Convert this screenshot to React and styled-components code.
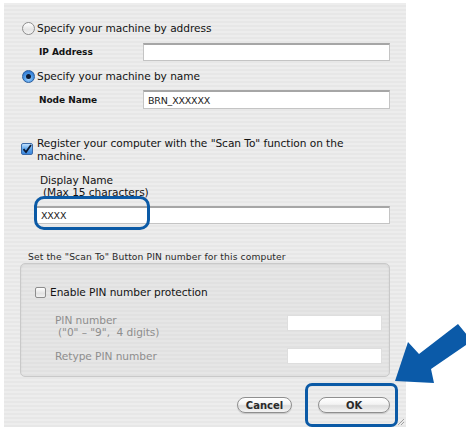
import React from "react";
import styled, { createGlobalStyle } from "styled-components";

const Global = createGlobalStyle`
  html, body { margin: 0; padding: 0; background: #ffffff; }
  body { font-family: "DejaVu Sans", "Liberation Sans", sans-serif; }
`;

const Stage = styled.div`
  position: relative;
  width: 466px;
  height: 432px;
  overflow: hidden;
  background: #fff;
`;

const Panel = styled.div`
  position: relative;
  margin: 3px 0 0 4px;
  width: 402px;
  height: 424px;
  box-sizing: border-box;
  padding: 17px 0 0 18px;
  display: flex;
  flex-direction: column;
  background: repeating-linear-gradient(
    to bottom,
    #ededed 0px,
    #ededed 2px,
    #e7e7e7 2px,
    #e7e7e7 4px
  );
  font-size: 10.6px;
  letter-spacing: -0.05px;
  color: #131313;
`;

const Row = styled.div`
  display: flex;
  align-items: center;
  height: ${(p) => p.$h || 16}px;
  margin-top: ${(p) => p.$mt || 0}px;
  margin-left: ${(p) => p.$ml || 0}px;
  white-space: nowrap;
`;

const RadioDot = styled.span`
  box-sizing: border-box;
  width: 13px;
  height: 13px;
  border-radius: 50%;
  flex: none;
  display: flex;
  align-items: center;
  justify-content: center;
  border: 1px solid ${(p) => (p.$on ? "#2a5d9c" : "#8d8d8d")};
  background: ${(p) =>
    p.$on
      ? "radial-gradient(circle at 50% 70%, #a9d6ff 0%, #4f9be8 45%, #1f64c4 100%)"
      : "linear-gradient(#ffffff, #e4e4e4 60%, #f4f4f4)"};
  &::after {
    content: "";
    display: ${(p) => (p.$on ? "block" : "none")};
    width: 5px;
    height: 5px;
    border-radius: 50%;
    background: #0f1b33;
  }
`;

const OptionText = styled.span`
  margin-left: 2px;
`;

const FieldLabel = styled.span`
  width: ${(p) => p.$w}px;
  flex: none;
  font-weight: bold;
  font-size: 9px;
  box-sizing: border-box;
`;

const TextInput = styled.div`
  box-sizing: border-box;
  width: ${(p) => p.$w}px;
  height: ${(p) => p.$h || 18}px;
  margin-left: ${(p) => p.$ml || 0}px;
  background: #ffffff;
  border: 1px solid #c4c4c4;
  border-top: 2px solid #a6a6a6;
  display: flex;
  align-items: center;
  padding-left: 4px;
  font-size: 9.5px;
  letter-spacing: -0.2px;
  color: #222;
`;

const CheckRow = styled.div`
  display: flex;
  align-items: flex-start;
  margin-top: ${(p) => p.$mt || 0}px;
  margin-left: ${(p) => p.$ml || 0}px;
`;

const CheckBox = styled.span`
  box-sizing: border-box;
  width: ${(p) => (p.$on ? 12 : 11)}px;
  height: ${(p) => (p.$on ? 12 : 11)}px;
  margin-top: ${(p) => p.$mt || 0}px;
  flex: none;
  border-radius: 2px;
  border: 1px solid ${(p) => (p.$on ? "#3a6aa8" : "#8d8d8d")};
  background: ${(p) =>
    p.$on
      ? "linear-gradient(#bfe0ff, #5ea6ec 50%, #3b86dc)"
      : "linear-gradient(#ffffff, #e2e2e2 60%, #f2f2f2)"};
  display: flex;
  align-items: center;
  justify-content: center;
`;

const CheckText = styled.div`
  margin-left: ${(p) => p.$ml || 4}px;
  line-height: ${(p) => p.$lh || 13}px;
  width: ${(p) => (p.$w ? `${p.$w}px` : "auto")};
  white-space: ${(p) => (p.$w ? "normal" : "nowrap")};
`;

const Stack = styled.div`
  display: flex;
  flex-direction: column;
  margin-top: ${(p) => p.$mt || 0}px;
  margin-left: ${(p) => p.$ml || 0}px;
  line-height: 12px;
`;

const Indent = styled.span`
  padding-left: 3px;
`;

const SmallCaption = styled.div`
  margin-top: ${(p) => p.$mt || 0}px;
  margin-left: 6px;
  font-size: 9.2px;
  line-height: 10px;
  letter-spacing: 0.1px;
  white-space: nowrap;
  color: #2a2a2a;
`;

const GroupBox = styled.div`
  box-sizing: border-box;
  margin-top: 1px;
  margin-left: -2px;
  width: 370px;
  height: 114px;
  border: 1px solid #c9c9c9;
  border-radius: 5px;
  background: repeating-linear-gradient(
    to bottom,
    #e6e6e6 0px,
    #e6e6e6 2px,
    #e1e1e1 2px,
    #e1e1e1 4px
  );
  box-shadow: inset 0 1px 2px rgba(0, 0, 0, 0.08);
  padding: 23px 0 0 14px;
  display: flex;
  flex-direction: column;
`;

const PinGrid = styled.div`
  display: grid;
  grid-template-columns: 232px 95px;
  grid-template-rows: 34px 16px;
  margin-top: 16px;
  margin-left: 20px;
  color: #8e8e8e;
  white-space: nowrap;
`;

const PinLabel = styled.div`
  line-height: 12px;
  padding-top: ${(p) => p.$pt || 0}px;
`;

const PinInput = styled.div`
  box-sizing: border-box;
  width: 95px;
  height: 16px;
  margin-top: ${(p) => p.$mt || 0}px;
  background: #ffffff;
  border: 1px solid #dedede;
`;

const ButtonBar = styled.div`
  display: flex;
  margin-top: 20px;
  margin-left: 215px;
  gap: 26px;
`;

const PillButton = styled.button`
  box-sizing: border-box;
  width: ${(p) => p.$w}px;
  height: 16px;
  border-radius: 8px;
  border: 1px solid #8f8f8f;
  background: linear-gradient(#ffffff 0%, #f3f3f3 45%, #dcdcdc 55%, #f4f4f4 100%);
  font-family: "DejaVu Sans", sans-serif;
  font-weight: bold;
  font-size: 10px;
  color: #2a2a2a;
  padding: 0;
  display: flex;
  align-items: center;
  justify-content: center;
  box-shadow: 0 1px 1px rgba(0, 0, 0, 0.15);
`;

const Highlight = styled.div`
  position: absolute;
  box-sizing: border-box;
  left: ${(p) => p.$x}px;
  top: ${(p) => p.$y}px;
  width: ${(p) => p.$w}px;
  height: ${(p) => p.$h}px;
  border: 3px solid #0b5aa6;
  border-radius: ${(p) => p.$r}px;
  pointer-events: none;
`;

const Overlay = styled.svg`
  position: absolute;
  left: 0;
  top: 0;
  pointer-events: none;
`;

const Grip = styled.svg`
  position: absolute;
  right: 1px;
  bottom: 1px;
`;

const Check = () => (
  <svg width="10" height="10" viewBox="0 0 10 10">
    <path d="M1.5 5.2 L4 8 L9 1" fill="none" stroke="#0d1a33" strokeWidth="1.8" />
  </svg>
);

export default function App() {
  return (
    <>
      <Global />
      <Stage>
        <Panel>
          <Row>
            <RadioDot />
            <OptionText>Specify your machine by address</OptionText>
          </Row>
          <Row $h={18} $mt={7} $ml={17}>
            <FieldLabel $w={104}>IP Address</FieldLabel>
            <TextInput $w={247} />
          </Row>
          <Row $mt={7}>
            <RadioDot $on />
            <OptionText>Specify your machine by name</OptionText>
          </Row>
          <Row $h={19} $mt={6} $ml={17}>
            <FieldLabel $w={104}>Node Name</FieldLabel>
            <TextInput $w={247} $h={19}>BRN_XXXXXX</TextInput>
          </Row>
          <CheckRow $mt={28} $ml={-1}>
            <CheckBox $on $mt={6}>
              <Check />
            </CheckBox>
            <CheckText $ml={4} $w={330}>
              Register your computer with the "Scan To" function on the machine.
            </CheckText>
          </CheckRow>
          <Stack $mt={11} $ml={18}>
            <span>Display Name</span>
            <Indent>(Max 15 characters)</Indent>
          </Stack>
          <Row $h={18} $mt={8} $ml={14}>
            <TextInput $w={354}>XXXX</TextInput>
          </Row>
          <SmallCaption $mt={28}>
            Set the "Scan To" Button PIN number for this computer
          </SmallCaption>
          <GroupBox>
            <CheckRow>
              <CheckBox />
              <CheckText $ml={4} $lh={11}>Enable PIN number protection</CheckText>
            </CheckRow>
            <PinGrid>
              <PinLabel $pt={0}>
                PIN number
                <br />
                <Indent>("0" – "9",&nbsp; 4 digits)</Indent>
              </PinLabel>
              <PinInput $mt={1} />
              <PinLabel $pt={2}>Retype PIN number</PinLabel>
              <PinInput />
            </PinGrid>
          </GroupBox>
          <ButtonBar>
            <PillButton $w={55}>Cancel</PillButton>
            <PillButton $w={72}>OK</PillButton>
          </ButtonBar>
          <Grip width="10" height="10" viewBox="0 0 10 10">
            <path d="M9 3 L3 9 M9 6 L6 9" stroke="#a0a0a0" strokeWidth="1" />
          </Grip>
        </Panel>
        <Highlight $x={34} $y={196} $w={116} $h={34} $r={10} />
        <Highlight $x={305} $y={383} $w={93} $h={44} $r={7} />
        <Overlay width="466" height="432" viewBox="0 0 466 432">
          <polygon
            points="395,381 408,342 419,354 458,324 472,341 431,369 434,383"
            fill="#0b5aa8"
          />
        </Overlay>
      </Stage>
    </>
  );
}
